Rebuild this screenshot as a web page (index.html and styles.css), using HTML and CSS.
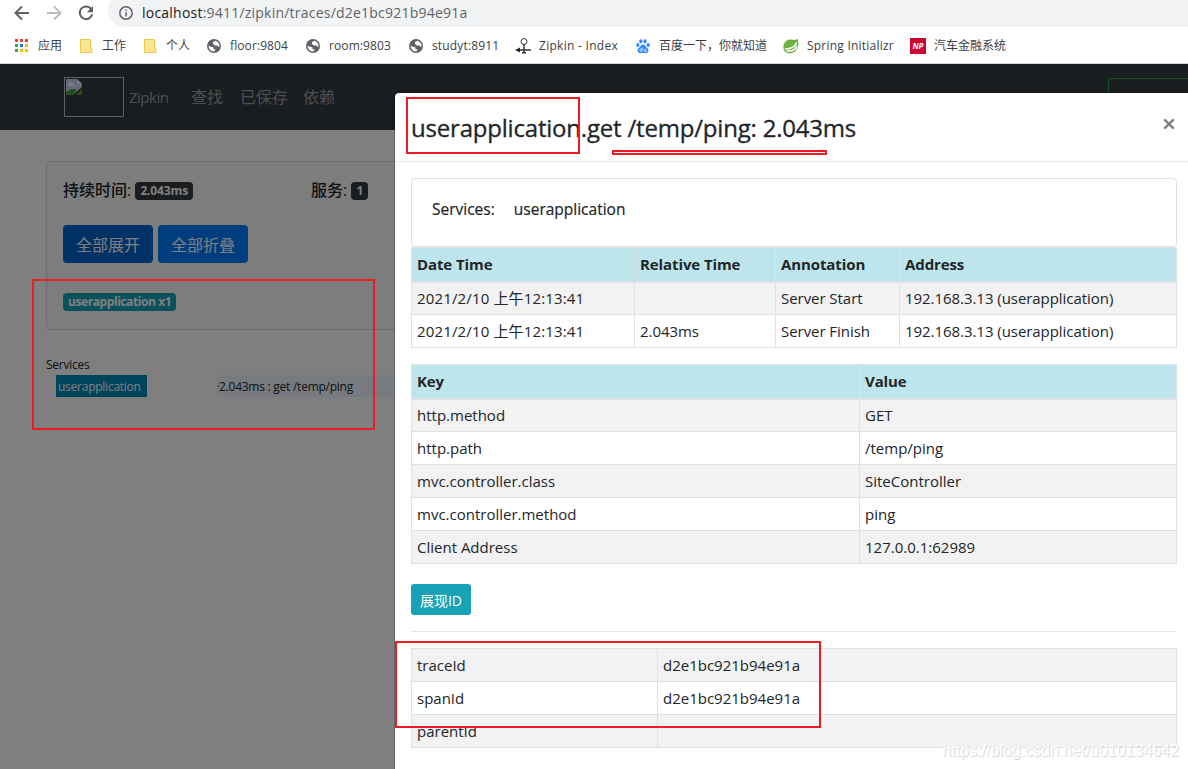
FILE: index.html
```html
<!DOCTYPE html>
<html lang="zh">

<head>
    <meta charset="UTF-8">
    <title>Zipkin</title>
    <link rel="stylesheet" href="styles.css">
</head>

<body>
    <div class="browser">
        <div class="toolbar">
            <svg class="tool_icon" viewBox="0 0 16 16"><path d="M15 8H2M8 1.5L1.5 8L8 14.5" /></svg>
            <svg class="tool_icon off" viewBox="0 0 16 16"><path d="M1 8H14M8 1.5L14.5 8L8 14.5" /></svg>
            <svg class="tool_icon" viewBox="0 0 16 16"><path d="M13.2 4.2A6.3 6.3 0 1 0 14.2 9.2" /><path class="solid" d="M15 1V7.2H8.8Z" /></svg>
            <div class="address">
                <svg class="info_icon" viewBox="0 0 14 14"><circle cx="7" cy="7" r="6.2" /><path d="M7 6.2V10.6M7 3.4V5" /></svg>
                <span class="url"><b>localhost</b>:9411/zipkin/traces/d2e1bc921b94e91a</span>
            </div>
        </div>
        <ul class="bookmarks">
            <li class="bm_apps">
                <svg width="14" height="14" viewBox="0 0 14 14">
                    <path fill="#ea4335" d="M0 0h3v3H0zM5 0h3v3H5zM10 0h3v3h-3z" />
                    <path fill="#34a853" d="M0 5h3v3H0zM0 10h3v3H0z" />
                    <path fill="#1a73e8" d="M5 5h3v3H5z" />
                    <path fill="#fbbc04" d="M10 5h3v3h-3zM5 10h3v3H5zM10 10h3v3h-3z" />
                </svg><span>应用</span>
            </li>
            <li class="bm_work"><svg width="13" height="14" viewBox="0 0 13 14"><path class="folder" d="M.5.5h10v9.5h1.5v3.5H.5z" /></svg><span>工作</span></li>
            <li class="bm_own"><svg width="13" height="14" viewBox="0 0 13 14"><path class="folder" d="M.5.5h10v9.5h1.5v3.5H.5z" /></svg><span>个人</span></li>
            <li class="bm_floor"><svg width="14" height="14" viewBox="0 0 14 14"><use href="#globe" /></svg><span>floor:9804</span></li>
            <li class="bm_room"><svg width="14" height="14" viewBox="0 0 14 14"><use href="#globe" /></svg><span>room:9803</span></li>
            <li class="bm_study"><svg width="14" height="14" viewBox="0 0 14 14"><use href="#globe" /></svg><span>studyt:8911</span></li>
            <li class="bm_zipkin">
                <svg width="16" height="16" viewBox="0 0 16 16">
                    <g fill="none" stroke="#333"><circle cx="9" cy="3.5" r="3" /><path stroke-width="1.4" d="M9 6.5V15.500M3 12H16M7 14.800H11" /></g>
                    <path fill="#222" d="M0 12L5 9.500V14.500z" />
                </svg><span>Zipkin - Index</span>
            </li>
            <li class="bm_baidu">
                <svg width="14" height="14" viewBox="0 0 14 14">
                    <g fill="#3385ff"><ellipse cx="1.800" cy="6" rx="1.600" ry="2" /><ellipse cx="4.800" cy="2.300" rx="1.600" ry="2.100" /><ellipse cx="9" cy="2.300" rx="1.600" ry="2.100" /><ellipse cx="12.200" cy="6" rx="1.600" ry="2" /><path d="M7 5.500C9 5.500 9.500 7.500 11 8.700C13.500 10.500 12.500 14 10 14H4C1.500 14 .5 10.500 3 8.700C4.500 7.500 5 5.500 7 5.500z" /></g>
                    <path fill="none" stroke="#fff" stroke-width=".7" d="M6 8.500V12.300H4.700A1.200 1.200 0 0 1 4.700 10H6M8 9.800V12.300H10V9.800" />
                </svg><span>百度一下，你就知道</span>
            </li>
            <li class="bm_spring">
                <svg width="16" height="16" viewBox="0 0 16 16">
                    <path fill="#6db33f" d="M14.500.5C16.500 6 15.500 15 7 15.500C4 15.500 1.500 14 1 12C-1 7 2 2 7 1.500C10 1.300 12.500 3 14.500.5z" />
                    <path fill="none" stroke="#fff" stroke-width="1.600" d="M2 11C8 11 12 9.500 13.500 4.500M3.500 13C8 13.500 12.500 12 14 8" />
                </svg><span>Spring Initializr</span>
            </li>
            <li class="bm_car"><i class="np">NP</i><span>汽车金融系统</span></li>
        </ul>
    </div>

    <div class="page">
        <header class="navbar">
            <div class="brand">
                <svg width="16" height="16" viewBox="0 0 16 16">
                    <path fill="#c3d3f4" d="M0 0H11L16 5V8L7 16H0z" />
                    <path fill="#fff" d="M2 6Q2 4 4 4Q6 2 7 5Q9 5 9 7H2z" />
                    <path fill="#4fa32f" d="M0 16V13Q6 8 11 11L7 16zM10 16L16 10V16z" />
                    <path fill="#eee" d="M11 0V5H16z" />
                </svg>
            </div>
            <a class="name">Zipkin</a>
            <a class="find">查找</a>
            <a class="saved">已保存</a>
            <a class="depend">依赖</a>
            <button class="lens">Try Lens UI</button>
        </header>
        <div class="summary">
            <div class="stats">
                <div class="duration">持续时间: <span class="badge">2.043ms</span></div>
                <div>服务: <span class="badge">1</span></div>
            </div>
            <div class="btns">
                <button class="btn active">全部展开</button>
                <button class="btn">全部折叠</button>
            </div>
            <span class="badge info">userapplication x1</span>
        </div>
        <div class="timeline">
            <div class="label">Services</div>
            <div class="span_row">
                <span class="service">userapplication</span>
                <span class="bar"><i>·</i>2.043ms : get /temp/ping</span>
            </div>
        </div>
    </div>
    <div class="backdrop"></div>

    <div class="modal">
        <div class="modal_header">
            <h4>userapplication.get /temp/ping: 2.043ms</h4>
            <svg class="close" viewBox="0 0 12 12"><path d="M1.300 1.300L10.700 10.700M10.700 1.300L1.300 10.700" /></svg>
        </div>
        <div class="modal_body">
            <div class="services"><span>Services:</span><span>userapplication</span></div>
            <table class="annotations">
                <thead>
                    <tr><th class="c_date">Date Time</th><th class="c_rel">Relative Time</th><th class="c_anno">Annotation</th><th>Address</th></tr>
                </thead>
                <tbody>
                    <tr><td>2021/2/10 上午12:13:41</td><td></td><td>Server Start</td><td>192.168.3.13 (userapplication)</td></tr>
                    <tr><td>2021/2/10 上午12:13:41</td><td>2.043ms</td><td>Server Finish</td><td>192.168.3.13 (userapplication)</td></tr>
                </tbody>
            </table>
            <table class="tags">
                <thead>
                    <tr><th class="c_key">Key</th><th>Value</th></tr>
                </thead>
                <tbody>
                    <tr><td>http.method</td><td>GET</td></tr>
                    <tr><td>http.path</td><td>/temp/ping</td></tr>
                    <tr><td>mvc.controller.class</td><td>SiteController</td></tr>
                    <tr><td>mvc.controller.method</td><td>ping</td></tr>
                    <tr><td>Client Address</td><td>127.0.0.1:62989</td></tr>
                </tbody>
            </table>
            <button class="btn_id">展现ID</button>
            <hr>
            <table class="ids">
                <tbody>
                    <tr><td class="c_id">traceId</td><td>d2e1bc921b94e91a</td></tr>
                    <tr><td>spanId</td><td>d2e1bc921b94e91a</td></tr>
                    <tr><td>parentId</td><td></td></tr>
                </tbody>
            </table>
        </div>
    </div>

    <div class="mark mark_title"></div>
    <div class="mark mark_line"></div>
    <div class="mark mark_service"></div>
    <div class="mark mark_ids"></div>
    <div class="watermark">https://blog.csdn.net/u010134642</div>

    <svg class="defs">
        <symbol id="globe" viewBox="0 0 14 14">
            <circle cx="7" cy="7" r="7" fill="#5f6368" />
            <path fill="#fff" d="M8.500 1.800L6 3V5L8 6.500H10.500L12.300 8.500C13 5 11.500 2.800 8.500 1.800zM1.700 6.500C2.500 8 5 7.500 6.500 8.500V10.500L8.500 10L7.500 12.400C4 12.500 1.300 10 1.700 6.500z" />
        </symbol>
    </svg>
</body>

</html>
```
FILE: styles.css
```css
* {
    margin: 0;
    padding: 0;
    box-sizing: border-box;
}

body {
    position: relative;
    width: 1188px;
    height: 769px;
    overflow: hidden;
    background: #fff;
    color: #212529;
    font: 15px/24px "Open Sans", "Noto Sans CJK SC", sans-serif;
    white-space: nowrap;
}

li {
    list-style: none;
}

button {
    font-family: inherit;
    border: none;
}

/* browser */
.browser {
    height: 64px;
    border-bottom: 1px solid #d5d7da;
    overflow: hidden;
}

.toolbar {
    display: flex;
    height: 27px;
    padding-left: 14px;
}

.tool_icon {
    flex: none;
    width: 16px;
    height: 16px;
    margin: 5px 16px 0 0;
    fill: none;
    stroke: #5f6368;
    stroke-width: 2;
}

.tool_icon.off {
    stroke: #babcbe;
}

.tool_icon .solid {
    fill: #5f6368;
    stroke: none;
}

.address {
    display: flex;
    flex: none;
    align-items: flex-start;
    width: 1120px;
    height: 34px;
    margin: -7px 0 0 -2px;
    padding: 13px 0 0 11px;
    border-radius: 17px;
    background: #f1f3f4;
}

.info_icon {
    width: 14px;
    height: 14px;
    margin-right: 9px;
    fill: none;
    stroke: #5f6368;
    stroke-width: 1.5;
}

.url {
    margin-top: -5px;
    font-size: 14px;
    letter-spacing: 0.22px;
    color: #5f6368;
}

.url b {
    font-weight: normal;
    color: #202124;
}

.bookmarks {
    display: flex;
    height: 37px;
    padding-left: 15px;
    font-size: 12px;
    color: #3c4043;
}

.bookmarks li {
    display: flex;
    flex: none;
    align-items: center;
}

.bookmarks svg {
    flex: none;
}

.bm_apps { width: 65px; gap: 9px; }
.bm_work { width: 64px; gap: 9px; }
.bm_own { width: 63px; gap: 9px; }
.bm_floor { width: 99px; gap: 9px; letter-spacing: 0.1px; }
.bm_room { width: 103px; gap: 9px; letter-spacing: 0.1px; }
.bm_study { width: 106px; gap: 9px; letter-spacing: 0.15px; }
.bm_zipkin { width: 121px; gap: 8px; letter-spacing: 0.28px; }
.bm_baidu { width: 147px; gap: 9px; }
.bm_spring { width: 127px; gap: 8px; letter-spacing: 0.22px; }
.bm_car { gap: 8px; }

.folder {
    fill: #ffe591;
    stroke: #ebc84b;
}

.np {
    width: 16px;
    height: 16px;
    background: #cc0633;
    color: #fff;
    font-size: 8px;
    font-weight: bold;
    line-height: 16px;
    text-align: center;
}

/* page behind the dialog */
.page {
    height: 705px;
    overflow: hidden;
}

.navbar {
    display: flex;
    align-items: center;
    height: 66px;
    padding-left: 64px;
    background: #343a40;
    color: #9a9da0;
    font-size: 16px;
    overflow: hidden;
}

.navbar > * {
    flex: none;
}

.brand {
    width: 60px;
    height: 40px;
    margin-right: 5px;
    padding: 1px;
    border: 1px solid #c0c0c0;
}

.brand svg {
    display: block;
}

.name {
    width: 62px;
    font-size: 15px;
    letter-spacing: -0.5px;
}

.find {
    width: 49px;
}

.saved {
    width: 63px;
}

.depend {
    width: 32px;
}

.lens {
    width: 115px;
    height: 38px;
    margin-left: 773px;
    padding-top: 3px;
    border: 1px solid #28a745;
    border-radius: 4px;
    background: none;
    color: #28a745;
    font-size: 16px;
}

.summary {
    width: 1160px;
    height: 169px;
    margin: 31px 0 0 46px;
    padding: 16px;
    border: 1px solid #d6d8db;
    border-radius: 4px;
    background: #f8faf9;
}

.stats {
    display: flex;
    height: 47px;
    font-size: 16px;
    font-weight: 500;
}

.duration {
    width: 248px;
}

.badge {
    display: inline-block;
    height: 18px;
    padding: 0 5px;
    border-radius: 4px;
    background: #343a40;
    color: #fff;
    font-size: 12px;
    font-weight: bold;
    line-height: 18px;
    letter-spacing: -0.15px;
    vertical-align: 1px;
}

.badge.info {
    margin-top: 30px;
    background: #17a2b8;
    letter-spacing: -0.42px;
    vertical-align: top;
}

.btns {
    display: flex;
    gap: 5px;
}

.btn {
    width: 90px;
    height: 38px;
    border-radius: 4px;
    background: #007bff;
    color: #fff;
    font-size: 16px;
}

.btn.active {
    background: #0062cc;
}

.timeline {
    margin: 24px 0 0 46px;
    font-size: 12px;
    letter-spacing: -0.25px;
}

.label {
    height: 21px;
    line-height: 22px;
}

.span_row {
    display: flex;
    padding-left: 10px;
    line-height: 23px;
}

.service {
    width: 91px;
    height: 22px;
    margin-right: 70px;
    padding-left: 2px;
    background: #0088b8;
    color: #fff;
}

.bar {
    width: 900px;
    height: 22px;
    background: #eef5fd;
}

.bar i {
    display: inline-block;
    width: 2px;
    overflow: hidden;
    vertical-align: top;
}

.backdrop {
    position: absolute;
    left: 0;
    top: 64px;
    width: 1188px;
    height: 705px;
    background: rgba(0, 0, 0, .5);
}

/* dialog */
.modal {
    position: absolute;
    left: 394px;
    top: 92px;
    width: 800px;
    height: 700px;
    border: 1px solid rgba(0, 0, 0, .2);
    border-radius: 5px;
    background: #fff;
    background-clip: padding-box;
}

.modal_header {
    display: flex;
    justify-content: space-between;
    height: 69px;
    padding: 16px;
    border-bottom: 1px solid #e9ecef;
}

.modal_header h4 {
    font-size: 24px;
    font-weight: 500;
    line-height: 38px;
    letter-spacing: -0.2px;
    -webkit-text-stroke: 0.3px;
}

.close {
    width: 12px;
    height: 12px;
    margin: 9px 2px 0 0;
    fill: none;
    stroke: #7f7f7f;
    stroke-width: 2.4;
}

.modal_body {
    width: 798px;
    padding: 16px;
}

.services {
    display: flex;
    gap: 19px;
    height: 69px;
    padding: 18px 20px;
    border: 1px solid #dfdfdf;
    border-radius: 4px;
    font-size: 15.5px;
    font-weight: 500;
    -webkit-text-stroke: 0.2px;
}

table {
    width: 766px;
    margin-bottom: 16px;
    border-collapse: collapse;
    table-layout: fixed;
}

th, td {
    height: 33px;
    padding: 0 5px;
    border: 1px solid #dee2e6;
    text-align: left;
}

th {
    height: 34px;
    border-bottom-width: 2px;
    background: #bee5eb;
    letter-spacing: -0.1px;
}

tbody tr:nth-child(odd) {
    background: #f2f2f2;
}

.annotations td {
    letter-spacing: -0.05px;
}

.annotations td:first-child {
    letter-spacing: 0.15px;
}

.c_date { width: 223px; }
.c_rel { width: 141px; }
.c_anno { width: 124px; }
.c_key { width: 448px; }
.c_id { width: 246px; }

.btn_id {
    display: block;
    width: 60px;
    height: 31px;
    margin-top: 20px;
    border-radius: 3px;
    background: #17a2b8;
    color: #fff;
    font-size: 14px;
}

hr {
    margin: 16px 0;
    border: none;
    border-top: 1px solid #e5e5e5;
}

/* red marks */
.mark {
    position: absolute;
    border: 2px solid #ed1c24;
}

.mark_title { left: 406px; top: 97px; width: 174px; height: 57px; }
.mark_line { left: 612px; top: 150px; width: 215px; height: 5px; }
.mark_service { left: 32px; top: 279px; width: 343px; height: 151px; }
.mark_ids { left: 395px; top: 641px; width: 426px; height: 87px; }

.watermark {
    position: absolute;
    right: 9px;
    bottom: 6px;
    font-family: "Liberation Sans", sans-serif;
    font-size: 16px;
    color: #fff;
    text-shadow: 1px 1px 1px #d0d0d0;
}

.defs {
    display: none;
}
```
